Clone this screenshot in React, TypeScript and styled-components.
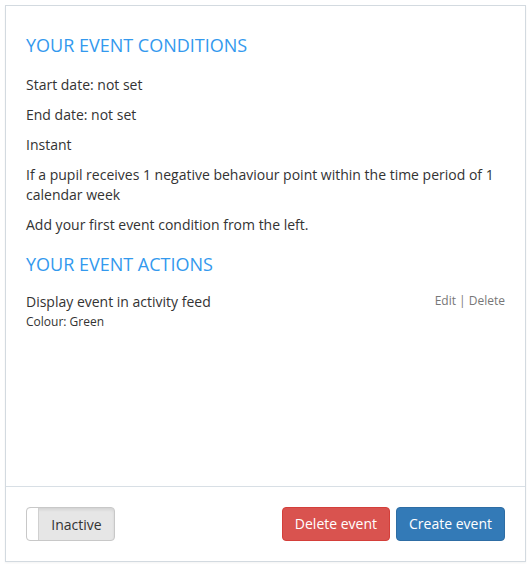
import React from "react";
import styled, { createGlobalStyle } from "styled-components";

const Global = createGlobalStyle`
  html, body { margin: 0; padding: 0; background: #fff; }
  body { font-family: "Open Sans", "Liberation Sans", sans-serif; font-size: 14px; color: #333; }
  * { box-sizing: border-box; }
`;

const Page = styled.div`
  padding: 5px;
  width: 531px;
`;

const Panel = styled.div`
  width: 521px;
  height: 557px;
  border: 1px solid #d3dae0;
  background: #fff;
  box-shadow: 0 1px 2px rgba(0, 0, 0, 0.05);
  display: flex;
  flex-direction: column;
`;

const Body = styled.div`
  flex: 1;
  padding: 14px 20px 0;
`;

const Heading = styled.h3<{ $first?: boolean }>`
  margin: ${(p) => (p.$first ? "15px" : "19px")} 0 20px;
  font-size: 18px;
  font-weight: 400;
  line-height: 20px;
  color: #3399ee;
`;

const Para = styled.p`
  margin: 0 0 10px;
  line-height: 20px;
`;

const ActionRow = styled.div`
  display: flex;
  justify-content: space-between;
  align-items: flex-start;
  margin-top: -2px;
`;

const ActionTitle = styled.div`
  line-height: 20px;
`;

const ActionMeta = styled.div`
  font-size: 12px;
  line-height: 20px;
`;

const ActionLinks = styled.div`
  font-size: 12px;
  line-height: 18px;
  color: #777;
`;

const Footer = styled.div`
  border-top: 1px solid #d8dfe5;
  padding: 20px;
  display: flex;
  justify-content: space-between;
  align-items: center;
`;

const Toggle = styled.div`
  position: relative;
  width: 89px;
  height: 34px;
  border: 1px solid #c8c8c8;
  border-radius: 4px;
  background: #e6e6e6;
  box-shadow: inset 0 2px 3px rgba(0, 0, 0, 0.08);
  display: flex;
  align-items: center;
  justify-content: center;
  padding-left: 12px;
  color: #333;
  font-size: 14px;
`;

const Handle = styled.span`
  position: absolute;
  left: 0;
  top: 0;
  bottom: 0;
  width: 12px;
  background: #fff;
  border-right: 1px solid #d0d0d0;
  border-radius: 4px 0 0 4px;
`;

const Buttons = styled.div`
  display: flex;
  gap: 6px;
`;

const Button = styled.button<{ $variant: "danger" | "primary" }>`
  height: 34px;
  padding: 6px 12px;
  font-family: inherit;
  font-size: 14px;
  line-height: 20px;
  color: #fff;
  border-radius: 4px;
  border: 1px solid ${(p) => (p.$variant === "danger" ? "#d43f3a" : "#2e6da4")};
  background: ${(p) => (p.$variant === "danger" ? "#d9534f" : "#337ab7")};
  cursor: pointer;
`;

export default function App() {
  return (
    <Page>
      <Global />
      <Panel>
        <Body>
          <Heading $first>YOUR EVENT CONDITIONS</Heading>
          <Para>Start date: not set</Para>
          <Para>End date: not set</Para>
          <Para>Instant</Para>
          <Para>
            If a pupil receives 1 negative behaviour point within the time period of 1 calendar week
          </Para>
          <Para>Add your first event condition from the left.</Para>
          <Heading>YOUR EVENT ACTIONS</Heading>
          <ActionRow>
            <div>
              <ActionTitle>Display event in activity feed</ActionTitle>
              <ActionMeta>Colour: Green</ActionMeta>
            </div>
            <ActionLinks>Edit | Delete</ActionLinks>
          </ActionRow>
        </Body>
        <Footer>
          <Toggle>
            <Handle />
            Inactive
          </Toggle>
          <Buttons>
            <Button $variant="danger">Delete event</Button>
            <Button $variant="primary">Create event</Button>
          </Buttons>
        </Footer>
      </Panel>
    </Page>
  );
}
